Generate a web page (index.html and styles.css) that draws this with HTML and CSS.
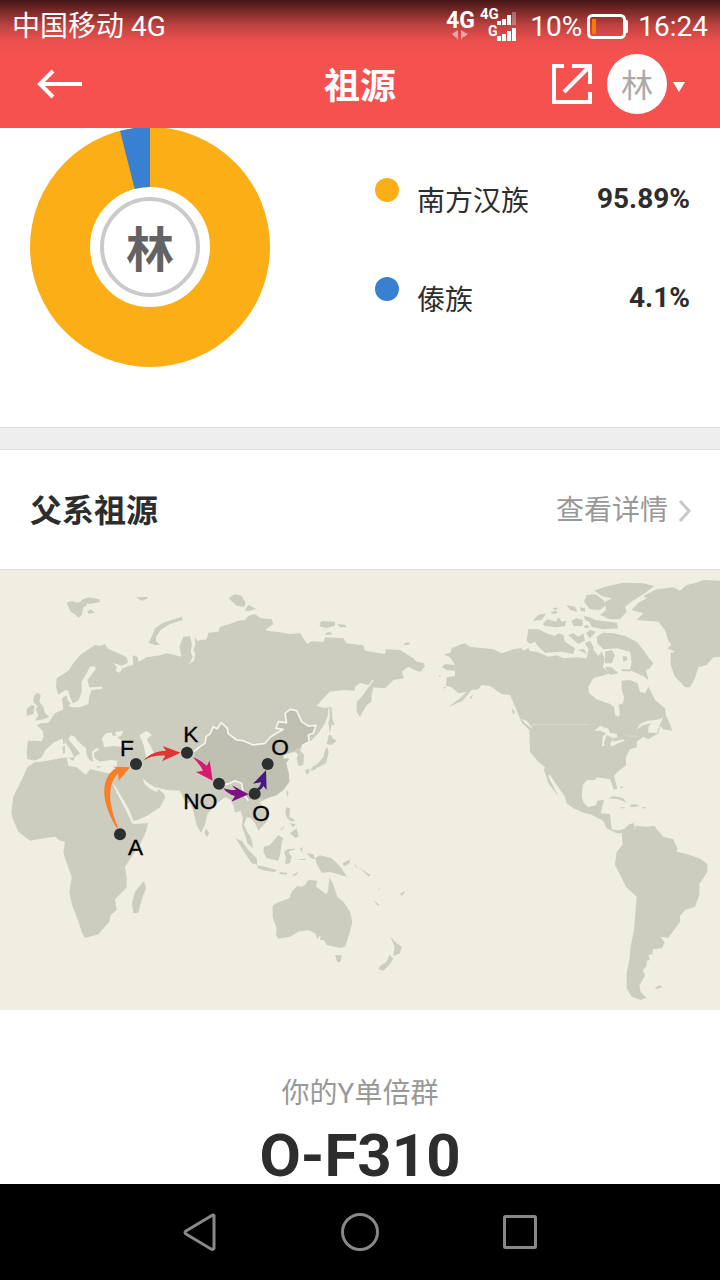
FILE: index.html
```html
<!DOCTYPE html>
<html lang="zh-CN">
<head>
<meta charset="utf-8">
<meta name="viewport" content="width=device-width, initial-scale=1">
<title>祖源</title>
<link rel="stylesheet" href="styles.css">
</head>
<body>
<header class="top">
  <div class="status">
    <span>中国移动 4G</span>
    <div class="status-right">
      <svg class="signal" viewBox="446 5 72 40" width="72" height="40" aria-hidden="true">
        <g fill="#fff" font-family="Roboto, sans-serif" font-weight="700">
          <text x="446" y="26" font-size="23">4G</text>
          <text x="480" y="17" font-size="15">4G</text>
          <text x="488" y="34" font-size="14">G</text>
          <path d="M497 19h4v4h-4zM502 17h4v6h-4zM507 13h4v10h-4zM497 34h4v5h-4zM502 32h4v7h-4zM507 29h4v10h-4zM512 26h4v13h-4z"/>
          <path d="M512 10h4v13h-4z" opacity=".3"/>
          <path d="M458 28v10l-2-3h-1l-3-3 3-2zM461 28v10l2-3h1l4-3-4-2z" opacity=".5"/>
        </g>
      </svg>
      <span class="percent">10%</span>
      <svg class="battery" viewBox="0 0 42 26" width="42" height="26" aria-hidden="true">
        <rect x="1.500" y="1.500" width="36" height="22" rx="4" fill="none" stroke="#fff" stroke-width="3"/>
        <path d="M38 6h2q1 0 1 2v9q0 2-1 2h-2z" fill="#fff"/>
        <path d="M5 5h4v15h-4z" fill="#f57c00"/>
      </svg>
      <span>16:24</span>
    </div>
  </div>
  <div class="appbar">
    <button class="icon-btn" type="button" aria-label="返回">
      <svg viewBox="0 0 48 32" width="48" height="32"><path d="M18 3 5 16l13 13M5 16h42" fill="none" stroke="#fff" stroke-width="4"/></svg>
    </button>
    <h1>祖源</h1>
    <div class="actions">
      <button class="icon-btn" type="button" aria-label="分享">
        <svg viewBox="0 0 40 40" width="40" height="40"><path d="M12 2H2v36h36V28M20 2h18v18M37 3 12 28" fill="none" stroke="#fff" stroke-width="4"/></svg>
      </button>
      <button class="profile" type="button" aria-label="林">
        <span class="avatar">林</span>
        <svg class="caret" viewBox="0 0 12 10" width="12" height="10"><path d="M0 0h12L6 10z" fill="#fff"/></svg>
      </button>
    </div>
  </div>
</header>

<main>
  <section class="summary">
    <svg class="donut" viewBox="0 1 240 239" role="img" aria-label="林">
      <circle cx="120" cy="120" r="90" fill="none" stroke="#fcae17" stroke-width="60"/>
      <path d="M120 0V60A60 60 0 0 0 104.700 62L90 3.900A120 120 0 0 1 120 0Z" fill="#3980d2"/>
      <circle cx="120" cy="120" r="48" fill="none" stroke="#c9cacb" stroke-width="4"/>
      <text class="donut-name" x="120" y="140" text-anchor="middle">林</text>
    </svg>
    <ul class="legend">
      <li><i class="dot han"></i><span>南方汉族</span><b>95.89%</b></li>
      <li><i class="dot dai"></i><span>傣族</span><b>4.1%</b></li>
    </ul>
  </section>

  <section class="paternal">
    <div class="section-head">
      <h2>父系祖源</h2>
      <a href="#detail">查看详情<svg viewBox="0 0 14 24" width="14" height="24"><path d="m2 2 9 10-9 10" fill="none" stroke="#c8c8c8" stroke-width="3"/></svg></a>
    </div>
    <svg class="map" viewBox="0 0 2160 1320" role="img" aria-label="父系迁徙路线">
      <g class="land">
        <!-- Eurasia -->
        <path d="M82 568 80 545 84 512 105 512 125 514 131 500 128 482 110 465 125 460 145 458 165 430 190 418 186 385 200 376 202 390 212 400 205 408 215 412 240 412 265 402 268 378 275 360 308 356 306 350 268 352 262 330 288 296 284 289 270 290 262 305 245 335 245 365 235 392 218 399 210 380 205 362 195 360 175 374 168 350 170 325 205 302 220 280 240 255 262 240 285 225 300 228 315 222 324 236 345 245 380 262 384 278 365 287 338 278 350 290 348 304 360 308 366 296 385 288 400 285 398 256 412 260 416 275 440 262 480 256 500 250 545 260 538 230 550 200 570 198 576 225 572 245 578 260 568 282 582 272 586 250 580 240 586 225 584 200 592 212 620 208 625 188 655 185 660 170 690 162 715 152 735 150 745 138 765 132 782 145 815 148 820 162 795 180 812 184 835 186 870 192 900 190 910 205 922 222 935 214 970 216 975 202 1030 205 1040 220 1090 226 1095 242 1155 252 1158 238 1200 240 1240 265 1250 275 1270 278 1275 288 1262 305 1250 302 1225 290 1205 305 1212 325 1180 330 1155 355 1120 352 1115 375 1114 395 1100 405 1080 440 1070 425 1070 395 1085 380 1120 332 1118 328 1105 345 1080 338 1065 350 1064 362 1030 360 990 365 970 385 950 408 975 415 985 412 984 435 975 460 955 490 930 515 905 530 900 540 912 555 910 585 895 588 890 565 895 555 885 545 850 556 850 566 868 565 858 580 866 610 868 635 850 660 830 675 800 686 780 696 786 710 802 725 804 750 775 782 765 760 752 745 740 742 732 765 742 786 752 800 760 835 742 820 735 795 726 770 728 745 722 722 705 728 700 705 693 690 675 682 650 700 622 732 615 765 602 788 590 765 580 725 572 698 560 700 550 685 540 662 500 660 470 652 492 672 495 685 480 712 440 738 400 755 385 725 350 660 340 645 330 600Z"/>
        <!-- Africa -->
        <path d="M105 576 145 568 200 562 230 590 350 600 342 645 375 715 398 758 444 758 440 780 420 825 398 855 375 890 380 925 380 952 345 988 350 1020 332 1035 328 1055 295 1093 255 1104 245 1085 232 1045 218 1010 208 970 215 920 195 865 190 845 195 815 180 812 165 800 135 804 90 812 55 785 42 755 34 730 40 680 65 630 82 592Z"/>
        <path d="M432 932 438 955 425 990 415 1028 400 1030 396 1000 405 965Z"/>
        <!-- British Isles, Svalbard, Arctic islands -->
        <path d="M102 378 112 368 122 375 118 395 130 410 135 430 148 440 132 448 105 452 115 435 108 420 112 408 100 395ZM95 404 104 408 100 432 80 437 80 418ZM200 98 215 93 232 98 248 92 262 105 250 112 245 135 235 143 225 133 212 125ZM243 90 265 82 298 88 300 96 270 102 250 98ZM262 124 272 118 285 128 265 131ZM408 82 425 82 443 80 442 86 425 92ZM446 218 455 200 465 175 490 158 545 140 549 150 510 162 482 180 468 200 468 214 480 225 465 225ZM686 85 705 72 725 78 737 98 734 110 712 108 700 98ZM734 123 745 104 768 116 750 122ZM958 162 965 153 1005 155 1005 167 980 174 962 170ZM1012 162 1035 164 1040 172 1020 172ZM975 190 990 185 998 193 980 195ZM1210 222 1225 216 1230 222 1215 226Z"/>
        <path d="M618 775 628 790 620 802 614 788Z"/>
        <!-- Japan, Sakhalin -->
        <path d="M988 410 994 412 998 450 1004 465 994 465 990 490 985 460 990 440ZM985 496 992 495 998 505 1010 512 995 525 980 522 984 508ZM982 532 986 548 978 580 955 592 940 595 935 592 952 582 970 562 975 540ZM915 600 928 597 928 608 920 614ZM932 596 950 590 948 598 935 602Z"/>
      </g>
      <g class="sea">
        <path d="M105 572 125 562 136 540 160 518 185 506 198 520 215 545 222 560 228 558 240 550 205 508 212 496 225 500 232 512 258 535 260 555 268 570 280 575 275 545 290 533 298 540 282 548 284 565 300 575 330 570 352 572 350 590 345 612 320 608 270 598 258 615 230 592 205 587 200 562 115 577Z"/>
        <path d="M310 520 305 505 318 490 335 487 338 498 350 496 344 487 370 482 365 495 352 503 380 520 372 532 340 528 312 532ZM418 495 440 482 456 495 440 508 450 525 462 550 455 565 438 560 432 530 425 510ZM338 640 350 655 388 720 400 752 444 748 440 760 398 762 375 715 350 668ZM428 624 445 640 465 652 478 654 470 666 450 656 432 640ZM186 505 190 520 180 515Z"/>
      </g>
      <g class="land"><path d="M189 508h5v14h-5zM187 530l8-2v20l-6 3zM204 564l20-3-3 12zM290 588l16 2-14 3z"/></g>
      <!-- China -->
      <path class="china" d="M582 545 600 530 615 520 618 500 630 492 640 470 652 476 664 458 682 475 684 490 710 510 760 525 795 520 812 500 850 478 828 475 835 455 860 458 855 430 870 418 890 422 905 455 925 468 948 466 940 490 925 495 928 515 905 528 880 542 850 556 850 568 868 565 858 580 866 610 868 635 850 660 830 675 790 688 765 680 740 692 730 670 725 640 705 632 680 640 660 645 620 610 590 575Z"/>
      <path class="border" d="M582 545 600 530 615 520 618 500 630 492 640 470 652 476 664 458 682 475 684 490 710 510 730 512 760 525 795 520 812 500 850 478 828 475 835 455 860 458 855 430 870 418 890 422 905 455 925 468 948 466 940 490 925 495 928 515 905 528M670 645 690 640 705 632 725 640 730 670 745 692"/>

      <!-- South-East Asia and Oceania -->
      <g class="land" transform="translate(600 510)">
        <path d="M108 296 125 302 145 330 170 355 172 374 155 370 135 340ZM172 376 200 382 230 390 225 396 195 392 172 384ZM238 396 262 398 260 404 240 402ZM278 404 298 394 290 404 280 408ZM192 320 210 315 235 285 250 295 245 310 240 345 235 362 200 355 190 335ZM252 335 262 328 288 326 265 336 275 350 270 370 255 372 258 352ZM258 202 270 205 268 230 285 240 275 245 262 235 256 220ZM270 280 290 265 296 290 285 293ZM258 152 266 155 262 172ZM268 250 288 252 280 262ZM240 270 255 255 246 270ZM320 340 340 343 345 358 332 354ZM345 355 360 346 395 355 425 385 440 410 412 402 390 396 365 398 352 375ZM428 370 452 358 446 372 432 379ZM300 325 308 322 306 340ZM290 358 318 356 315 361ZM461 370 472 382 469 384ZM475 380 510 405 507 410ZM535 442 540 448 538 452ZM520 480 538 494 532 496ZM600 462 618 452 606 467Z"/>
        <path d="M218 498 228 490 268 475 275 455 292 438 305 440 315 435 325 420 352 422 348 440 380 463 385 450 388 412 398 430 412 470 430 485 450 515 457 545 450 575 435 620 420 624 380 615 372 600 360 600 362 585 352 596 345 580 325 570 295 575 270 590 235 596 228 585 230 565 218 530ZM405 645 425 646 422 665 412 667ZM572 592 590 610 605 620 600 640 580 648 584 620ZM568 645 580 655 570 672 550 692 536 688 540 678 560 665Z"/>
      </g>

      <!-- North America, Arctic archipelago, Greenland -->
      <g transform="translate(1290 0)">
        <g class="land">
          <path d="M42 253 62 248 65 235 90 224 105 220 120 230 190 238 215 250 250 238 275 234 280 243 295 234 300 243 320 245 355 260 380 256 400 265 440 262 470 265 475 240 490 238 505 258 515 245 525 270 518 290 540 310 490 325 475 350 477 370 500 388 540 402 552 410 555 435 566 440 570 430 565 405 580 400 582 380 575 360 575 332 600 330 622 340 630 365 645 370 655 350 668 375 675 390 705 415 708 438 720 462 726 482 700 478 690 468 685 490 655 508 640 500 620 515 620 532 600 538 588 560 588 585 560 608 552 618 562 655 552 660 540 628 500 622 495 630 470 630 458 645 455 680 460 697 475 712 498 705 502 692 522 690 512 730 540 732 545 778 560 782 582 778 590 790 560 790 530 775 520 752 480 732 465 730 430 715 410 700 405 680 380 645 358 612 355 620 385 678 370 660 355 640 342 600 345 592 325 575 300 545 298 480 275 458 262 425 240 375 215 372 180 348 155 345 145 358 125 360 98 392 55 412 90 385 110 365 85 370 65 352 48 348 50 322 75 318 75 302 50 300 36 292 45 282 75 285 60 262Z"/>
          <path d="M290 212 295 178 325 178 355 192 375 198 385 190 400 195 405 215 435 235 430 252 395 245 345 248 325 230 315 215 300 222ZM415 195 430 190 445 200 460 190 465 212 445 222ZM468 190 480 180 498 185 480 205ZM465 220 480 212 492 235 480 245ZM445 240 462 236 470 252ZM500 200 520 188 550 190 585 198 620 215 640 240 655 262 670 280 660 295 648 300 655 330 640 318 625 312 600 300 605 275 600 245 560 235 520 238 502 220ZM525 245 545 240 555 255 545 280 525 280ZM578 260 590 258 592 270 580 275ZM525 290 545 292 565 310 540 315ZM575 298h28v6h-28zM308 152 325 135 348 130 335 150ZM338 162 352 148 378 155 385 142 395 155 408 152 405 168 380 172 345 168ZM425 152 440 145 458 150 458 168 430 168ZM462 138 480 142 495 150 560 158 565 175 520 178 485 170 478 155 465 150ZM462 168 472 165 480 172 465 175ZM362 125 380 122 382 130 368 132ZM370 113h12v6h-12zM410 106 435 110 442 125 420 120ZM450 112 465 115 465 126 452 122ZM462 95 470 75 495 72 520 90 528 105 510 120 480 118ZM493 62 525 50 580 38 640 40 672 48 650 65 600 98 585 110 590 125 570 148 540 148 510 135 528 120 525 95 545 85 515 78Z"/>
          <path d="M625 98 650 85 640 78 680 58 730 52 750 62 770 45 800 38 820 30 870 32V260L850 262 830 285 805 292 795 325 780 352 765 352 750 335 735 320 722 285 722 250 735 245 712 235 725 225 715 212 705 180 685 155 620 150 640 130 605 120Z"/>
          <path d="M245 415 255 425 250 435ZM118 382 128 375 125 387ZM27 317h4v4h-4zM40 352h8v3h-8zM535 685 550 678 580 685 590 698 565 688ZM600 705 615 702 630 708 602 712ZM572 712h12v3h-12zM638 712h10v3h-10zM570 650h10v4h-10z"/>
        </g>
        <path class="sea" d="M493 482 510 468 535 476 540 488 560 492 562 502 550 505 548 515 580 508 584 512 560 522 545 530 540 522 550 505 540 500 530 495 522 520 524 528 516 528 518 500 528 490 510 482ZM618 480 630 462 650 453 690 448 700 440 685 475 682 488 655 488 655 470 665 460 640 465ZM628 330 640 340 638 352 630 345ZM270 446 290 452 308 475 300 472Z"/>
        <path class="hairline" d="M305 464H480M590 498H620"/>
      </g>

      <!-- South America -->
      <g class="land" transform="translate(1290 600)">
        <path d="M545 178 560 182 582 178 595 164 615 157 620 168 650 170 675 168 678 175 700 200 730 208 742 235 740 245 770 252 810 266 832 282 832 305 808 342 808 375 795 410 765 420 750 438 750 455 715 503 692 500 704 518 695 535 668 538 668 552 655 555 660 570 650 572 650 588 638 600 645 615 635 635 628 645 632 665 650 684 632 690 605 680 590 655 590 610 598 570 602 530 612 480 620 380 588 350 555 285 560 245 578 225 575 185 560 180Z"/>
        <path d="M675 652 690 646 696 652 680 657Z"/>
      </g>
      <path class="sea" d="M1900 756 1908 760 1905 780Z"/>

      <!-- Migration route -->
      <path fill="#fa7d28" d="M350 774C318 720 302 665 321 625C328 609 338 600 348 594L338 590 390 592 356 632 354 610C327 640 319 688 354 772Z"/>
      <path fill="#e23432" d="M430 572C449 551 470 543 498 542L488 528 542 548 486 574 496 557C472 555 452 559 430 572Z"/>
      <path fill="#d91870" d="M578 562C596 568 610 577 620 588L629 572 638 632 588 606 609 602C602 588 593 576 578 562Z"/>
      <path fill="#7d1282" d="M670 655C684 659 695 661 708 660L696 646 746 673 694 695 705 678C692 675 680 668 670 655Z"/>
      <path fill="#45197d" d="M772 655C779 650 782 645 783 637L759 641 798 601 800 659 790 648C786 656 781 660 775 661Z"/>
      <g class="nodes">
        <circle cx="360" cy="793" r="18"/><circle cx="408" cy="582" r="18"/><circle cx="561" cy="548" r="18"/>
        <circle cx="657" cy="641" r="18"/><circle cx="764" cy="671" r="18"/><circle cx="803" cy="582" r="18"/>
      </g>
      <g class="labels">
        <text x="384" y="855">A</text><text x="360" y="559">F</text><text x="550" y="515">K</text>
        <text x="550" y="716">NO</text><text x="757" y="754">O</text><text x="814" y="556">O</text>
      </g>
    </svg>
    <div class="result">
      <p>你的Y单倍群</p>
      <strong>O-F310</strong>
    </div>
  </section>
</main>

<nav class="system">
  <button type="button" aria-label="后退"><svg viewBox="0 0 40 40"><path d="M34 3.500V36.500Q33 38 31 37L6 22Q4 20.500 6 19L31 4Q33 2.500 34 3.500Z"/></svg></button>
  <button type="button" aria-label="主页"><svg viewBox="0 0 40 40"><circle cx="20" cy="20" r="17.500"/></svg></button>
  <button type="button" aria-label="最近任务"><svg viewBox="0 0 40 40"><rect x="4.500" y="4.500" width="31" height="31" rx="1"/></svg></button>
</nav>
</body>
</html>
```

FILE: styles.css
```css
* { box-sizing: border-box; }
body {
  margin: 0;
  height: 100vh;
  display: flex;
  flex-direction: column;
  background: #fff;
  color: #2d2d2d;
  font-family: Roboto, "Noto Sans CJK SC", sans-serif;
  font-size: 28px;
}
button {
  padding: 0;
  border: 0;
  background: none;
  color: inherit;
  font: inherit;
}
svg { display: block; }
h1, h2, p, ul { margin: 0; padding: 0; }

.top {
  flex: none;
  color: #fff;
  background: linear-gradient(#431716 0, #7d2b29 12px, #c04341 26px, #e94f4c 40px, #f5524f 54px);
}
.status {
  display: flex;
  justify-content: space-between;
  align-items: center;
  height: 40px;
  padding: 14px 12px 0;
  line-height: 28px;
}
.status-right { display: flex; align-items: center; }
.percent { margin: 0 5px 0 12px; }
.battery { margin-right: 9px; }
.appbar {
  display: grid;
  grid-template-columns: 1fr auto 1fr;
  align-items: center;
  height: 88px;
  padding: 0 35px;
}
.icon-btn { justify-self: start; }
.appbar h1 { padding-top: 6px; font-size: 36px; line-height: 48px; }
.actions {
  display: flex;
  align-items: center;
  justify-content: flex-end;
  gap: 15px;
}
.profile { display: flex; align-items: center; gap: 6px; }
.caret { margin-top: 6px; }
.avatar {
  width: 60px;
  height: 60px;
  padding-top: 4px;
  border-radius: 50%;
  background: #fff;
  color: #aaa;
  font-size: 32px;
  line-height: 56px;
  text-align: center;
}

main { flex: 1; min-height: 0; overflow: hidden; }
.summary {
  display: grid;
  grid-template-columns: 240px 1fr;
  column-gap: 105px;
  padding: 0 30px 60px;
}
.donut { width: 240px; height: 239px; }
.donut-name { fill: #636363; font-size: 48px; font-weight: 700; }
.legend { list-style: none; padding-top: 21px; }
.legend li {
  display: grid;
  grid-template-columns: 24px 1fr auto;
  column-gap: 18px;
  align-items: center;
  height: 99px;
}
.dot { height: 24px; margin-bottom: 18px; border-radius: 50%; }
.han { background: #fcae17; }
.dai { background: #3980d2; }

.paternal { border-top: 1px solid #ddd; }
.paternal::before {
  content: "";
  display: block;
  height: 21px;
  background: #eee;
  border-bottom: 1px solid #ddd;
}
.section-head {
  display: flex;
  justify-content: space-between;
  align-items: center;
  height: 120px;
  padding: 2px 28px 0 30px;
  border-bottom: 1px solid #ddd;
}
.section-head h2 { font-size: 32px; line-height: 48px; }
.section-head a {
  display: flex;
  align-items: center;
  gap: 10px;
  color: #999;
  line-height: 40px;
  text-decoration: none;
}
.map { width: 100%; height: auto; background: #efeee0; }
.land { fill: #ccccbf; }
.sea { fill: #efeee0; }
.china { fill: #bfbfb2; }
.border { fill: none; stroke: #f6f6ec; stroke-width: 5; stroke-linejoin: round; }
.hairline { stroke: #d8d8cb; stroke-width: 3; }
.nodes { fill: #2b302e; }
.labels {
  font-family: "Liberation Sans", sans-serif;
  font-size: 68px;
  stroke: #000;
  stroke-width: 1;
}
.result { padding-top: 64px; text-align: center; }
.result p { color: #999; line-height: 40px; }
.result strong { display: block; margin-top: 14px; font-size: 60px; line-height: 56px; }

.system {
  flex: none;
  display: flex;
  justify-content: center;
  gap: 120px;
  height: 96px;
  background: #000;
}
.system svg {
  width: 40px;
  height: 40px;
  fill: none;
  stroke: #888;
  stroke-width: 3;
}
```
